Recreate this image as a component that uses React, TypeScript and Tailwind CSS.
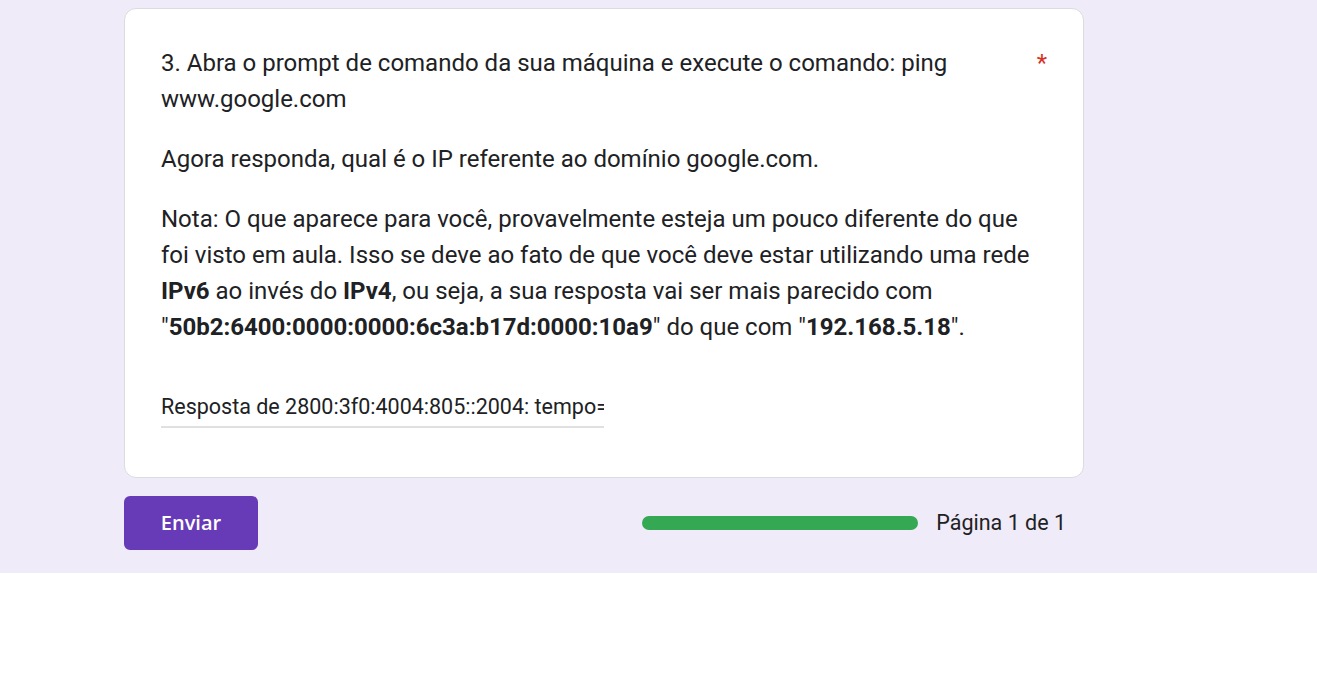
export default function App() {
  return (
    <div className="min-h-screen bg-white" style={{ fontFamily: "Roboto, 'Noto Sans', sans-serif" }}>
      <div className="bg-[#f0ebf8] pt-[8px] pb-[23px]">
        <div className="ml-[124px] w-[960px]">
          {/* Question card */}
          <div className="rounded-[12px] border border-[#dadce0] bg-white px-[36px] pt-[36px] pb-[49px] text-[#202124]">
            <div className="flex items-start justify-between gap-4">
              <div className="text-[24px] leading-[36px]">
                3. Abra o prompt de comando da sua máquina e execute o comando: ping www.google.com
              </div>
              <span className="text-[24px] leading-[36px] text-[#d93025]">*</span>
            </div>
            <div className="mt-[24px] text-[24px] leading-[36px]">
              <p>Agora responda, qual é o IP referente ao domínio google.com.</p>
              <p className="mt-[24px]">
                Nota: O que aparece para você, provavelmente esteja um pouco diferente do que foi visto em aula. Isso se deve ao fato de que você deve estar utilizando uma rede{" "}
                <b>IPv6</b> ao invés do <b>IPv4</b>, ou seja, a sua resposta vai ser mais parecido com "
                <b>50b2:6400:0000:0000:6c3a:b17d:0000:10a9</b>" do que com "<b>192.168.5.18</b>".
              </p>
            </div>
            <div className="mt-[47px] w-[443px] overflow-hidden border-b-2 border-[#e0e0e0]">
              <input
                readOnly
                value="Resposta de 2800:3f0:4004:805::2004: tempo=12ms"
                className="w-full bg-transparent pb-[4px] text-[21.5px] leading-[30px] text-[#202124] outline-none"
              />
            </div>
          </div>

          {/* Footer */}
          <div className="mt-[18px] flex items-center justify-between pr-[18px]">
            <button
              className="h-[54px] w-[134px] rounded-[6px] bg-[#673ab7] text-[20px] font-semibold text-white"
              style={{ fontFamily: "'Open Sans', Roboto, sans-serif" }}
            >
              Enviar
            </button>
            <div className="flex items-center gap-[18px]">
              <div className="h-[14px] w-[276px] rounded-full bg-[#34a853]" />
              <span className="text-[21.5px] text-[#202124]">Página 1 de 1</span>
            </div>
          </div>
        </div>
      </div>
    </div>
  );
}
